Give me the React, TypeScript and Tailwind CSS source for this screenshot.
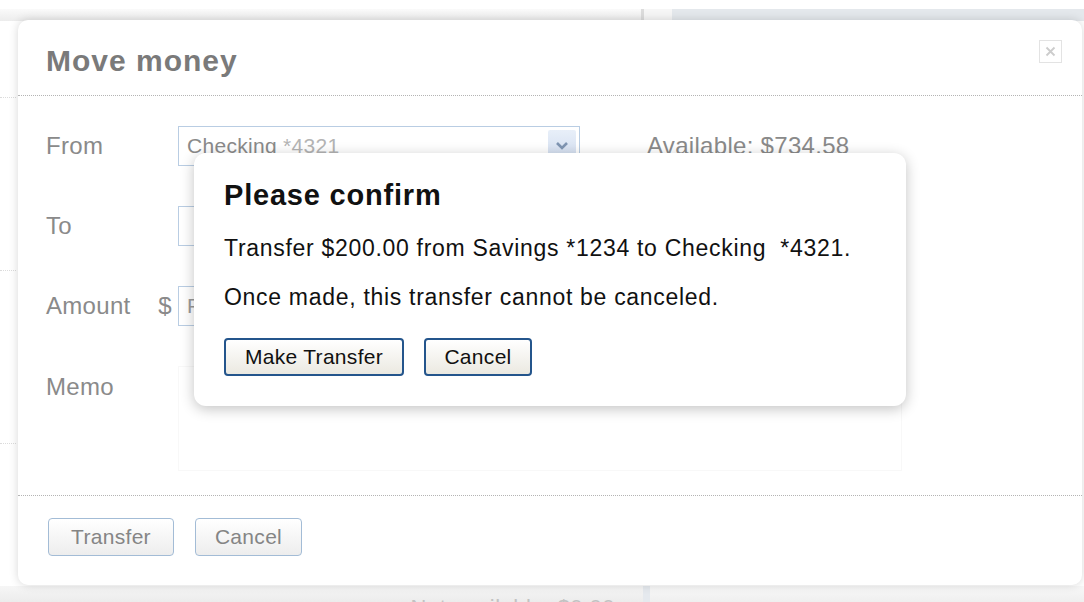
import React from "react";

function CloseIcon() {
  return (
    <svg width="11" height="11" viewBox="0 0 11 11">
      <path d="M1.5 1.5 L9.5 9.5 M9.5 1.5 L1.5 9.5" stroke="#cccccc" strokeWidth="1.8" />
    </svg>
  );
}

function Chevron() {
  return (
    <svg width="14" height="10" viewBox="0 0 14 10">
      <path d="M2 2 L7 7 L12 2" fill="none" stroke="#7f95b2" strokeWidth="2.6" />
    </svg>
  );
}

export default function App() {
  return (
    <div className="relative h-[602px] w-[1084px] overflow-hidden bg-white font-['Liberation_Sans',Arial,sans-serif]">
      {/* page behind the dialog */}
      <div className="flex h-full flex-col">
        <div className="h-[9px]" />
        <div className="flex h-[12px]">
          <div className="w-[641px] bg-gradient-to-b from-[#fafafa] to-[#ececec]" />
          <div className="w-[3px] bg-[#dcdcdc]" />
          <div className="w-[28px] bg-[#f6f6f6]" />
          <div className="flex-1 bg-[#e4e8ec]" />
        </div>
        <div className="flex flex-1">
          <div className="flex w-[16px] flex-col">
            <div className="h-[76px]" />
            <div className="h-[173px] border-t border-dotted border-[#dcdcdc]" />
            <div className="h-[173px] border-t border-dotted border-[#dcdcdc]" />
            <div className="border-t border-dotted border-[#dcdcdc]" />
          </div>
        </div>
        <div className="flex h-[16px]">
          <div className="flex w-[643px] justify-end overflow-hidden bg-gradient-to-b from-[#f6f6f6] to-[#ececec] pr-[28px] pt-[11px] text-[22px] leading-none tracking-[0.5px] text-[#c2c2c2]">
            Not available: $0.00
          </div>
          <div className="w-[7px] bg-[#e5e9ee]" />
          <div className="flex-1 bg-gradient-to-b from-[#f8f8f8] to-[#efefef]" />
        </div>
      </div>

      {/* Move money dialog */}
      <div className="absolute left-[18px] top-[20px] flex h-[565px] w-[1064px] flex-col rounded-[10px] bg-white shadow-[0_0_10px_rgba(0,0,0,0.16)]">
        <div className="relative flex h-[76px] items-center border-b border-dotted border-[#b4b4b4] pl-[28px] pt-[6px]">
          <h1 className="text-[30px] font-bold leading-none tracking-[1px] text-[#7a7a7a]">Move money</h1>
          <div className="absolute right-[20px] top-[20px] flex h-[23px] w-[23px] items-center justify-center border border-[#e3e3e3]">
            <CloseIcon />
          </div>
        </div>

        <div className="flex flex-col gap-[40px] pt-[30px] text-[24px] tracking-[0.3px] text-[#8a8a8a]">
          <div className="flex h-[40px] items-center">
            <div className="w-[160px] pl-[28px]">From</div>
            <div className="flex h-[40px] w-[402px] items-center justify-between border border-[#b9cde3] pl-[8px] pr-[3px]">
              <span className="text-[21px] text-[#8a8a8a]">
                Checking <span className="text-[#b4b4b4]">*4321</span>
              </span>
              <div className="flex h-[33px] w-[28px] items-center justify-center rounded-[2px] bg-gradient-to-b from-[#e8eff9] to-[#cfdbee]">
                <Chevron />
              </div>
            </div>
            <div className="ml-[67px]">Available: $734.58</div>
          </div>

          <div className="flex h-[40px] items-center">
            <div className="w-[160px] pl-[28px]">To</div>
            <div className="h-[40px] w-[402px] border border-[#b9cde3]" />
          </div>

          <div className="flex h-[40px] items-center">
            <div className="flex w-[160px] justify-between pl-[28px] pr-[6px]">
              <span>Amount</span>
              <span>$</span>
            </div>
            <div className="flex h-[40px] w-[200px] items-center border border-[#b9cde3] pl-[8px] text-[21px] text-[#9a9a9a]">
              F
            </div>
          </div>

          <div className="flex items-start">
            <div className="w-[160px] pl-[28px] pt-[3px]">Memo</div>
            <div className="h-[105px] w-[724px] border border-[#f8f8f8]" />
          </div>
        </div>

        <div className="mt-[24px] border-b border-dotted border-[#b4b4b4]" />

        <div className="flex gap-[21px] pl-[30px] pt-[22px] text-[21px] tracking-[0.3px] text-[#858585]">
          <button className="h-[38px] w-[126px] rounded-[4px] border-[1.5px] border-[#a3bcd6] bg-gradient-to-b from-white to-[#ededed]">
            Transfer
          </button>
          <button className="h-[38px] w-[107px] rounded-[4px] border-[1.5px] border-[#a3bcd6] bg-gradient-to-b from-white to-[#ededed]">
            Cancel
          </button>
        </div>
      </div>

      {/* confirmation popup */}
      <div className="absolute left-[194px] top-[153px] flex h-[253px] w-[712px] flex-col rounded-[12px] bg-white px-[30px] pt-[28px] text-[#111] shadow-[0_3px_14px_rgba(0,0,0,0.24)]">
        <h2 className="text-[29px] font-bold leading-none tracking-[0.8px]">Please confirm</h2>
        <p className="mt-[27px] text-[23px] leading-none tracking-[0.7px]">
          Transfer $200.00 from Savings *1234 to Checking{"\u00a0 "}*4321.
        </p>
        <p className="mt-[26px] text-[23px] leading-none tracking-[0.7px]">
          Once made, this transfer cannot be canceled.
        </p>
        <div className="mt-[29px] flex gap-[20px] text-[21px] tracking-[0.3px]">
          <button className="h-[38px] w-[180px] rounded-[4px] border-[2px] border-[#24558c] bg-gradient-to-b from-white to-[#ebe9e1]">
            Make Transfer
          </button>
          <button className="h-[38px] w-[108px] rounded-[4px] border-[2px] border-[#24558c] bg-gradient-to-b from-white to-[#ebe9e1]">
            Cancel
          </button>
        </div>
      </div>
    </div>
  );
}
